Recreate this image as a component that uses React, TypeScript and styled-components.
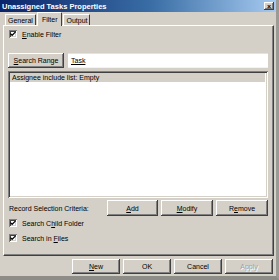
import styled, { createGlobalStyle } from "styled-components";

const Global = createGlobalStyle`
  html, body { margin: 0; padding: 0; background: #d4d0c8; }
  body { font-family: "Liberation Sans", Arial, sans-serif; font-size: 7px; color: #000; }
`;

const raised = `
  box-shadow: inset -1px -1px #404040, inset 1px 1px #ffffff, inset -2px -2px #808080, inset 2px 2px #d4d0c8;
`;
const sunken = `
  box-shadow: inset 1px 1px #808080, inset -1px -1px #ffffff, inset 2px 2px #404040, inset -2px -2px #d4d0c8;
`;

const Window = styled.div`
  width: 279px;
  height: 280px;
  box-sizing: border-box;
  background: #d4d0c8;
  display: flex;
  flex-direction: column;
  border-right: 3px solid #9c9a94;
  border-bottom: 4px solid #8e8c86;
  overflow: hidden;
`;

const TitleBar = styled.div`
  height: 12px;
  flex: none;
  display: flex;
  align-items: center;
  justify-content: space-between;
  padding: 0 2px 0 2px;
  background: linear-gradient(to right, #0a246a, #3a6ea5 55%, #a6caf0);
  color: #fff;
  font-weight: bold;
  font-size: 7.5px;
`;

const CloseBtn = styled.div`
  width: 10px;
  height: 8px;
  background: #d4d0c8;
  ${raised}
  display: flex;
  align-items: center;
  justify-content: center;
  font-size: 7px;
  font-weight: bold;
  color: #000;
  line-height: 1;
`;

const Body = styled.div`
  flex: 1;
  display: flex;
  flex-direction: column;
  padding: 1px 2px 0 3px;
`;

const TabStrip = styled.div`
  display: flex;
  align-items: flex-end;
  height: 12px;
  padding-left: 1px;
`;

const Tab = styled.div<{ $active?: boolean }>`
  height: ${(p) => (p.$active ? 13 : 10)}px;
  padding: 0 ${(p) => (p.$active ? 4 : 2)}px;
  margin: 0 ${(p) => (p.$active ? 0 : 1)}px ${(p) => (p.$active ? -1 : 0)}px;
  display: flex;
  align-items: center;
  border-left: 1px solid #ffffff;
  border-top: 1px solid #ffffff;
  border-right: 1px solid #404040;
  border-top-left-radius: 1px;
  border-top-right-radius: 1px;
  background: #d4d0c8;
  position: relative;
  z-index: ${(p) => (p.$active ? 2 : 1)};
`;

const Panel = styled.div`
  height: 231px;
  box-sizing: border-box;
  border-left: 1px solid #ffffff;
  border-top: 1px solid #ffffff;
  border-right: 1px solid #404040;
  border-bottom: 1px solid #404040;
  box-shadow: inset -1px -1px #808080;
  display: flex;
  flex-direction: column;
  padding: 3px 5px 0 4px;
`;

const CheckRow = styled.label`
  display: flex;
  align-items: center;
  gap: 5px;
  height: 10px;
  margin-left: 1px;
`;

const Box = styled.span`
  width: 8px;
  height: 8px;
  box-sizing: border-box;
  background: #fff;
  ${sunken}
  display: flex;
  align-items: center;
  justify-content: center;
`;

const U = styled.span`
  text-decoration: underline;
`;

const SearchRow = styled.div`
  display: flex;
  gap: 4px;
  margin-top: 14px;
  height: 15px;
`;

const Button = styled.div<{ $w: number; $disabled?: boolean }>`
  width: ${(p) => p.$w}px;
  height: 100%;
  box-sizing: border-box;
  background: #d4d0c8;
  ${raised}
  display: flex;
  align-items: center;
  justify-content: center;
  color: ${(p) => (p.$disabled ? "#a0a0a0" : "#000")};
  text-shadow: ${(p) => (p.$disabled ? "1px 1px #ffffff" : "none")};
`;

const TextField = styled.div`
  flex: 1;
  background: #fff;
  display: flex;
  align-items: center;
  padding-left: 3px;
  border-top: 1px solid #e4e2dc;
  border-bottom: 1px solid #f4f3f0;
`;

const ListBox = styled.div`
  margin-top: 3px;
  height: 127px;
  box-sizing: border-box;
  background: #fff;
  ${sunken}
  padding: 2px 3px 2px 2px;
`;

const ListItem = styled.div`
  height: 9px;
  background: #d4d0c8;
  display: flex;
  align-items: center;
  padding-left: 2px;
`;

const CriteriaRow = styled.div`
  display: flex;
  align-items: center;
  height: 16px;
  margin-top: 2px;
`;

const Label = styled.div`
  flex: 1;
  padding-left: 1px;
`;

const ButtonGroup = styled.div`
  display: flex;
  gap: 3px;
  height: 100%;
`;

const Checks = styled.div`
  display: flex;
  flex-direction: column;
  gap: 5px;
  margin-top: 2px;
`;

const Footer = styled.div`
  display: flex;
  justify-content: flex-end;
  gap: 3px;
  height: 15px;
  margin-top: 3px;
  padding-right: 1px;
`;

function Check() {
  return (
    <svg width="6" height="6" viewBox="0 0 7 7">
      <path d="M0.5 3 L2.5 5 L6.5 1" stroke="#000" strokeWidth="1.4" fill="none" />
    </svg>
  );
}

function CheckBox({ children }: { children: React.ReactNode }) {
  return (
    <CheckRow>
      <Box>
        <Check />
      </Box>
      <span>{children}</span>
    </CheckRow>
  );
}

export default function App() {
  return (
    <Window>
      <Global />
      <TitleBar>
        <span>Unassigned Tasks Properties</span>
        <CloseBtn>×</CloseBtn>
      </TitleBar>
      <Body>
        <TabStrip>
          <Tab>General</Tab>
          <Tab $active>Filter</Tab>
          <Tab>Output</Tab>
        </TabStrip>
        <Panel>
          <CheckBox>
            <U>E</U>nable Filter
          </CheckBox>
          <SearchRow>
            <Button $w={56}>
              <span>
                <U>S</U>earch Range
              </span>
            </Button>
            <TextField>
              <U>Task</U>
            </TextField>
          </SearchRow>
          <ListBox>
            <ListItem>Assignee include list: Empty</ListItem>
          </ListBox>
          <CriteriaRow>
            <Label>Record Selection Criteria:</Label>
            <ButtonGroup>
              <Button $w={51}>
                <span>
                  <U>A</U>dd
                </span>
              </Button>
              <Button $w={52}>
                <span>
                  <U>M</U>odify
                </span>
              </Button>
              <Button $w={52}>
                <span>
                  R<U>e</U>move
                </span>
              </Button>
            </ButtonGroup>
          </CriteriaRow>
          <Checks>
            <CheckBox>
              Search C<U>h</U>ild Folder
            </CheckBox>
            <CheckBox>
              Search in <U>F</U>iles
            </CheckBox>
          </Checks>
        </Panel>
        <Footer>
          <Button $w={48}>
            <span>
              <U>N</U>ew
            </span>
          </Button>
          <Button $w={48}>OK</Button>
          <Button $w={48}>Cancel</Button>
          <Button $w={48} $disabled>
            Apply
          </Button>
        </Footer>
      </Body>
    </Window>
  );
}
